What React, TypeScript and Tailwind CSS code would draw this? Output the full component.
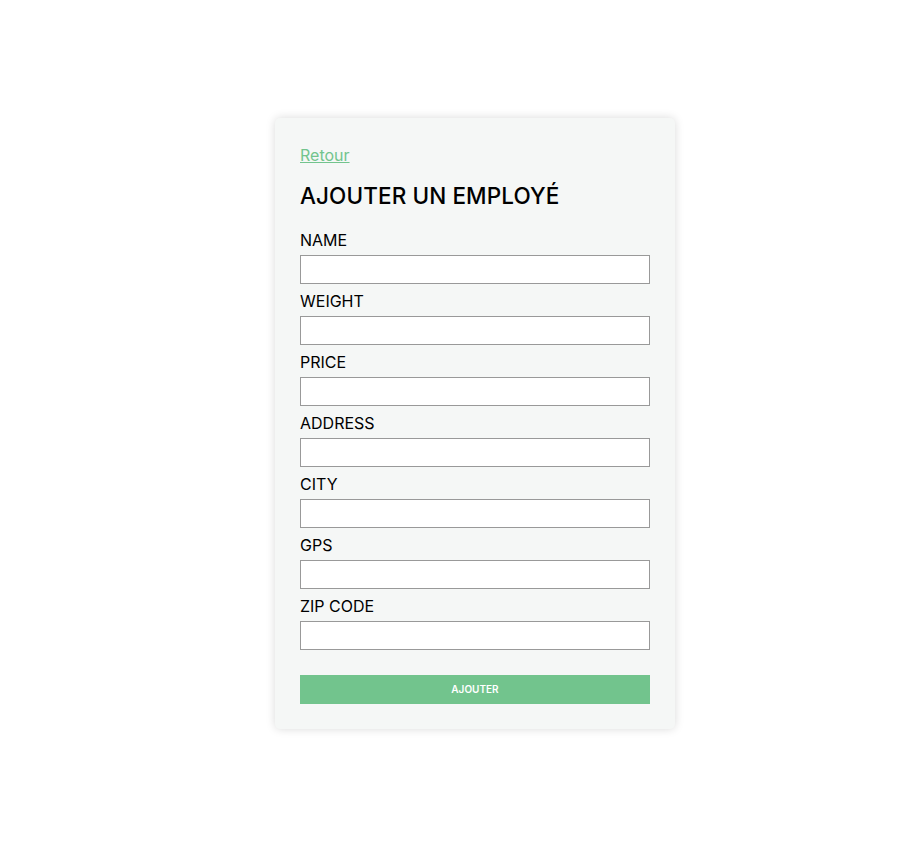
import React from "react";

const fields = ["NAME", "WEIGHT", "PRICE", "ADDRESS", "CITY", "GPS", "ZIP CODE"];

const App: React.FC = () => {
  return (
    <div className="min-h-screen bg-white pt-[118px] font-['Inter',sans-serif] text-black">
      <div className="ml-[275px] w-[400px] rounded-[5px] bg-[#f5f7f6] p-[25px] shadow-[0_0_10px_rgba(0,0,0,0.15)]">
        <a href="#" className="block text-[16px] leading-[24px] text-[#72c48d] underline">
          Retour
        </a>
        <h1 className="mt-[14px] text-[22.5px] leading-[30px] font-medium tracking-[0.1px]">AJOUTER UN EMPLOYÉ</h1>
        <form className="mt-[20px]" onSubmit={(e) => e.preventDefault()}>
          {fields.map((f) => (
            <div key={f} className="mb-[8px]">
              <label className="mb-[6px] block text-[16px] leading-[18px]">{f}</label>
              <input type="text" className="block h-[29px] w-[350px] border border-[#999] bg-white px-2 outline-none" />
            </div>
          ))}
          <button type="submit" className="mt-[25px] block h-[29px] w-[350px] bg-[#72c48d] text-[10px] font-semibold text-white">
            AJOUTER
          </button>
        </form>
      </div>
    </div>
  );
};

export default App;
